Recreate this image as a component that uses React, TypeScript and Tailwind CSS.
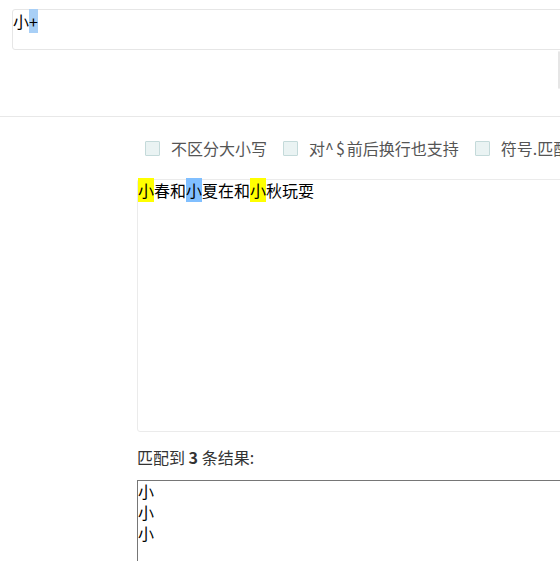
import React from 'react';

const font = { fontFamily: '"Noto Sans CJK SC", "Liberation Sans", sans-serif' };
const listFont = { fontFamily: '"Liberation Sans", "Noto Sans CJK SC", sans-serif' };

function Check({ children }: { children: React.ReactNode }) {
  return (
    <label className="flex items-center gap-[11px] text-[16px] leading-[20px] text-[#555]">
      <span className="h-[15px] w-[15px] rounded-[1px] border border-[#c4dada] bg-[#eaf3f3]" />
      <span>{children}</span>
    </label>
  );
}

export default function App() {
  return (
    <div className="h-[561px] w-[560px] overflow-hidden bg-white text-black" style={font}>
      {/* Pattern input */}
      <div className="pl-3 pt-[9px]">
        <div className="h-[41px] w-[700px] rounded-[3px] border border-[#e6e6e6] pt-px text-[16px] leading-[20px]">
          小<span className="bg-[#a8cff6]">+</span>
        </div>
        <div className="flex pl-[546px] pt-px">
          <div className="h-[38px] w-[60px] rounded-[3px] border border-[#e6e6e6]" />
        </div>
      </div>

      <div className="mt-[27px] h-px w-full bg-[#e8e8e8]" />

      <div className="pl-[137px]">
        {/* Options */}
        <div className="flex gap-[16px] pl-2 pt-[21px] whitespace-nowrap">
          <Check>不区分大小写</Check>
          <Check>
            对<span className="tracking-[2px]">^$</span>前后换行也支持
          </Check>
          <Check>符号.匹配换行符</Check>
        </div>

        {/* Source text */}
        <div className="mt-[21px] h-[253px] w-[600px] rounded-[3px] border border-[#ebebeb] text-[16px] leading-[20px]">
          <span className="bg-[#ffff00]">小</span>春和<span className="bg-[#80bfff]">小</span>夏在和
          <span className="bg-[#ffff00]">小</span>秋玩耍
        </div>

        <p className="mt-[15px] text-[16px] leading-[20px] text-[#333]">
          匹配到 <b>3</b> 条结果:
        </p>

        {/* Results */}
        <div
          className="mt-[13px] h-[100px] w-[600px] border border-[#767676] pt-px text-[16px] leading-[21px]"
          style={listFont}
        >
          <div>小</div>
          <div>小</div>
          <div>小</div>
        </div>
      </div>
    </div>
  );
}
